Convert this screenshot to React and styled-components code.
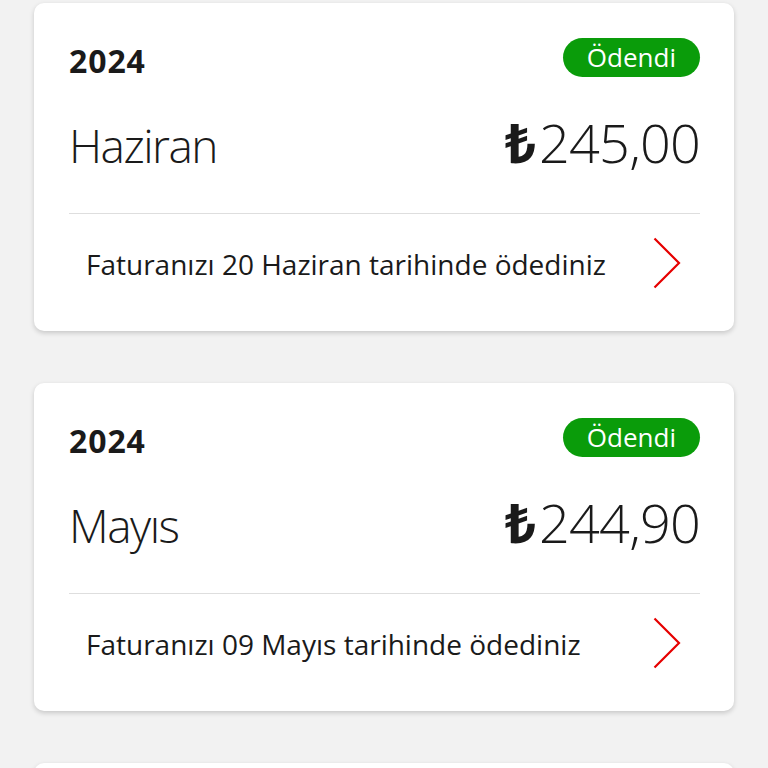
import React from 'react';
import styled, { createGlobalStyle } from 'styled-components';

const GlobalStyle = createGlobalStyle`
  html, body {
    margin: 0;
    padding: 0;
    background: #f2f2f2;
    font-family: "Open Sans", "Noto Sans", sans-serif;
    color: #1a1a1a;
  }
`;

const Page = styled.div`
  display: flex;
  flex-direction: column;
  gap: 52px;
  padding: 3px 34px 0;
  height: 768px;
  overflow: hidden;
  box-sizing: border-box;
`;

const Card = styled.div`
  flex-shrink: 0;
  background: #fff;
  border-radius: 10px;
  box-shadow: 0 2px 5px rgba(0, 0, 0, 0.18);
  padding: 34px 34px 0 35px;
  height: 328px;
  box-sizing: border-box;
  display: flex;
  flex-direction: column;
`;

const TopRow = styled.div`
  display: flex;
  justify-content: space-between;
  align-items: center;
  height: 40px;
`;

const Year = styled.div`
  font-size: 32px;
  font-weight: 700;
  letter-spacing: 0.9px;
  margin-top: 6px;
`;

const Badge = styled.div`
  background: #0a9c0a;
  color: #fff;
  font-size: 26px;
  font-weight: 400;
  line-height: 39px;
  height: 39px;
  padding: 0 24px;
  border-radius: 20px;
`;

const MainRow = styled.div`
  display: flex;
  justify-content: space-between;
  align-items: baseline;
  margin-top: 31px;
  height: 68px;
  line-height: 68px;
`;

const Month = styled.div`
  font-size: 46px;
  font-weight: 300;
  letter-spacing: -1.5px;
`;

const Amount = styled.div`
  font-size: 54px;
  font-weight: 300;
  letter-spacing: -0.8px;
`;

const Lira = styled.span`
  font-weight: 700;
  letter-spacing: 0;
  margin-right: 3px;
`;

const Divider = styled.hr`
  border: 0;
  border-top: 1px solid #dedede;
  margin: 37px 0 0;
`;

const Footer = styled.div`
  display: flex;
  align-items: center;
  justify-content: space-between;
  padding: 0 19px 0 17px;
  height: 98px;
`;

const FooterText = styled.div`
  font-size: 28px;
  font-weight: 400;
  margin-top: 2px;
  white-space: nowrap;
`;

const Chevron = () => (
  <svg width="28" height="52" viewBox="0 0 28 52" fill="none">
    <path d="M1.5 1.5 L26 26 L1.5 50.5" stroke="#e60000" strokeWidth="2.2" />
  </svg>
);

const bills = [
  { year: '2024', month: 'Haziran', amount: '245,00', day: '20' },
  { year: '2024', month: 'Mayıs', amount: '244,90', day: '09' },
  { year: '2024', month: 'Nisan', amount: '244,90', day: '10' },
];

const BillCard = ({ bill }) => (
  <Card>
    <TopRow>
      <Year>{bill.year}</Year>
      <Badge>Ödendi</Badge>
    </TopRow>
    <MainRow>
      <Month>{bill.month}</Month>
      <Amount>
        <Lira>₺</Lira>
        {bill.amount}
      </Amount>
    </MainRow>
    <Divider />
    <Footer>
      <FooterText>
        Faturanızı {bill.day} {bill.month} tarihinde ödediniz
      </FooterText>
      <Chevron />
    </Footer>
  </Card>
);

const App = () => (
  <>
    <GlobalStyle />
    <Page>
      {bills.map((b, i) => (
        <BillCard key={i} bill={b} />
      ))}
    </Page>
  </>
);

export default App;
